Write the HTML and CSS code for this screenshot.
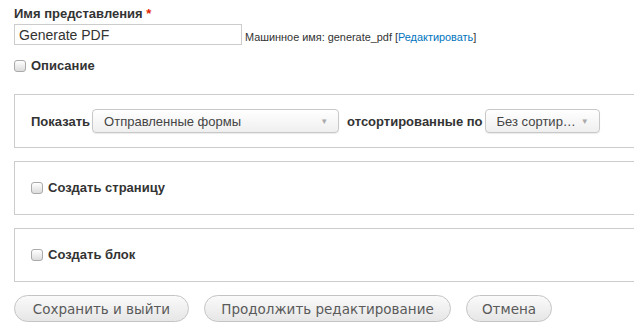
FILE: index.html
```html
<!DOCTYPE html>
<html lang="ru">

<head>
  <meta charset="UTF-8">
  <title>Generate PDF</title>
  <link rel="stylesheet" href="styles.css">
</head>

<body>
  <div class="page">
    <div class="form-item">
      <label for="label">Имя представления <span class="required">*</span></label>
      <div class="name-row">
        <input id="label" type="text" value="Generate PDF">
        <span class="machine-name">Машинное имя: generate_pdf [<a href="#">Редактировать</a>]</span>
      </div>
    </div>

    <div class="check-item">
      <span class="checkbox"></span>
      <span class="check-label">Описание</span>
    </div>

    <div class="fieldset show-row">
      <span class="field-label">Показать</span>
      <div class="select select-wide">
        <span>Отправленные формы</span>
        <span class="arrow">▼</span>
      </div>
      <span class="field-label">отсортированные по</span>
      <div class="select select-narrow">
        <span>Без сортир…</span>
        <span class="arrow">▼</span>
      </div>
    </div>

    <div class="fieldset">
      <div class="check-item">
        <span class="checkbox"></span>
        <span class="check-label">Создать страницу</span>
      </div>
    </div>

    <div class="fieldset">
      <div class="check-item">
        <span class="checkbox"></span>
        <span class="check-label">Создать блок</span>
      </div>
    </div>

    <div class="actions">
      <button class="btn-save">Сохранить и выйти</button>
      <button class="btn-continue">Продолжить редактирование</button>
      <button class="btn-cancel">Отмена</button>
    </div>
  </div>
</body>

</html>
```

FILE: styles.css
```css
body {
  margin: 0;
  overflow: hidden;
  font-family: "Liberation Sans", Arial, sans-serif;
  font-size: 13px;
  color: #333;
  background-color: white;
}

.page {
  padding: 6px 0 0 14px;
  width: 700px;
}

.form-item label {
  display: block;
  font-weight: bold;
  line-height: 15px;
  margin-bottom: 3px;
}

.required {
  color: #e32700;
}

.name-row {
  display: flex;
  align-items: flex-end;
}

.name-row input {
  width: 228px;
  height: 21px;
  box-sizing: border-box;
  border: 1px solid #ccc;
  padding: 1px 4px;
  font-family: "Liberation Sans", Arial, sans-serif;
  font-size: 14px;
  color: #333;
  margin: 0;
}

.machine-name {
  font-size: 10.9px;
  margin-left: 3px;
  line-height: 14px;
  margin-bottom: 1px;
}

.machine-name a {
  color: #0074bd;
  text-decoration: none;
}

.check-item {
  display: flex;
  align-items: center;
  margin-top: 13px;
  line-height: 16px;
}

.checkbox {
  width: 10px;
  height: 10px;
  border: 1px solid #aaa;
  border-radius: 3px;
  background: linear-gradient(#ffffff, #dcdcdc);
  margin-right: 5px;
}

.check-label {
  font-weight: bold;
}

.fieldset {
  border: 1px solid #ccc;
  height: 52px;
  padding: 0 16px;
  display: flex;
  align-items: center;
}

.show-row {
  margin-top: 20px;
}

.fieldset + .fieldset {
  margin-top: 13px;
}

.fieldset .check-item {
  margin-top: 0;
}

.field-label {
  font-weight: bold;
  margin-right: 2px;
}

.select {
  display: flex;
  align-items: center;
  justify-content: space-between;
  height: 24px;
  box-sizing: border-box;
  border: 1px solid #c8c8c8;
  border-radius: 4px;
  background: linear-gradient(#ffffff, #efefef);
  box-shadow: 0 1px 1px rgba(0, 0, 0, 0.08);
  padding: 0 10px 0 11px;
  font-size: 13px;
  color: #444;
  margin-right: 8px;
}

.select-wide {
  width: 247px;
}

.select-narrow {
  width: 115px;
}

.arrow {
  font-size: 8px;
  color: #aaa;
}

.actions {
  display: flex;
  gap: 15px;
  margin-top: 13px;
}

.actions button {
  height: 27px;
  border: 1px solid #c4c4c4;
  border-radius: 14px;
  background: linear-gradient(#fafafa, #e6e6e6);
  font-family: "DejaVu Sans", Verdana, sans-serif;
  font-size: 13.5px;
  color: #5a5a5a;
  padding: 0 10px;
  cursor: pointer;
}

.btn-save {
  width: 175px;
}

.btn-continue {
  width: 247px;
}

.btn-cancel {
  width: 86px;
}
```
